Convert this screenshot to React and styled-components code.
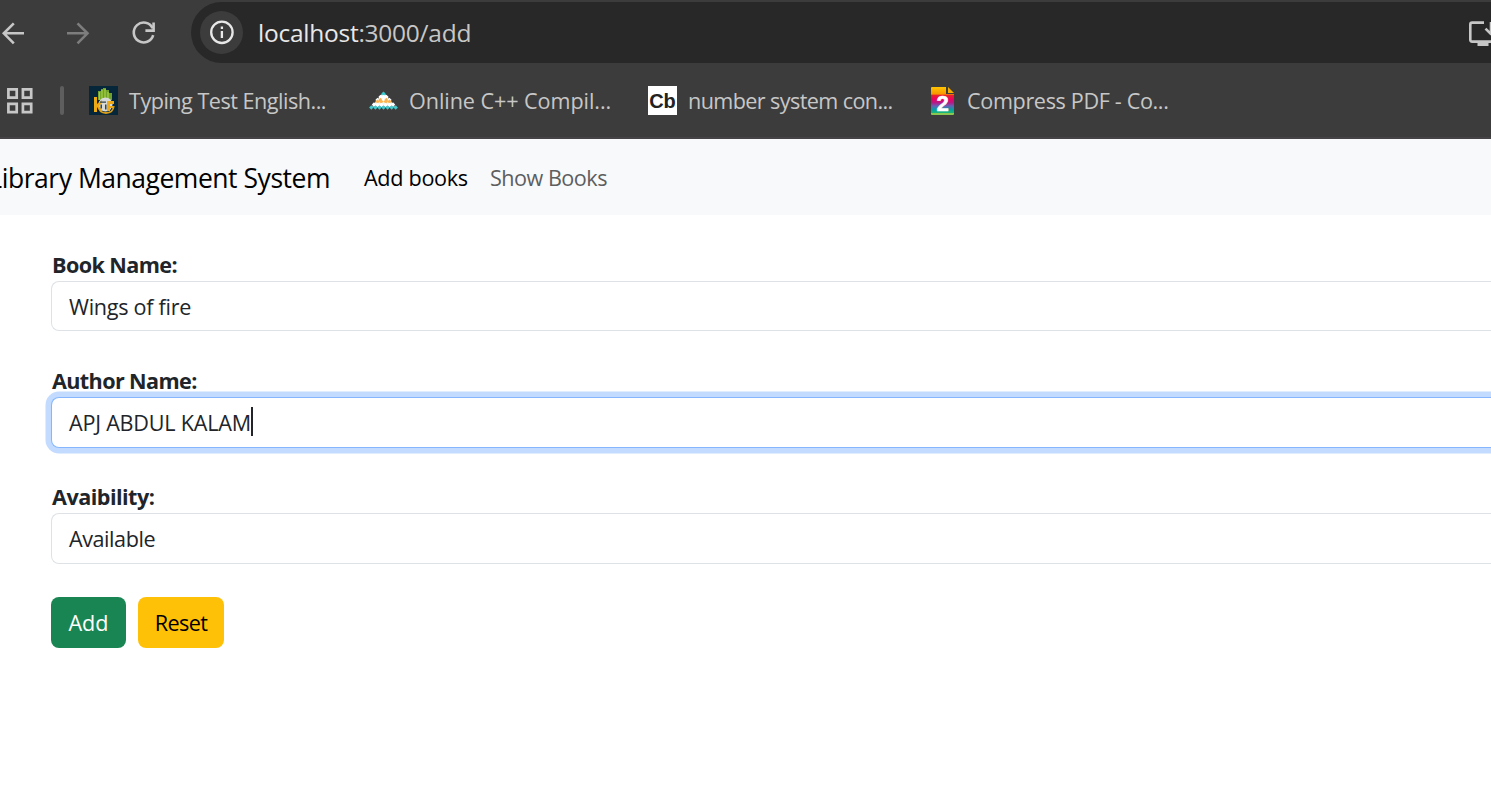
import React from "react";
import styled, { createGlobalStyle } from "styled-components";

const GlobalStyle = createGlobalStyle`
  *, *::before, *::after { box-sizing: border-box; }
  html, body { margin: 0; height: 100%; overflow: hidden; }
  body {
    background: #fff;
    color: #212529;
    font-family: "Open Sans", "Noto Sans", sans-serif;
    font-size: 21.6px;
    line-height: 33px;
  }
`;

const Chrome = styled.header`
  height: 139px;
  background: #3c3c3c;
  border-bottom: 2px solid #454345;
  overflow: hidden;
`;

const Toolbar = styled.div`
  display: flex;
  align-items: center;
  height: 63px;
  padding-top: 2px;
`;

const NavIcons = styled.div`
  display: flex;
  align-items: center;
  width: 191px;
  height: 61px;
  flex: none;
`;

const AddressBar = styled.div`
  flex: 1;
  display: flex;
  align-items: center;
  height: 61px;
  padding-left: 9px;
  border-radius: 31px 0 0 31px;
  background: #282828;
  color: #c7c7c7;
  font-size: 24.5px;
  white-space: nowrap;
`;

const InfoBadge = styled.span`
  display: grid;
  place-items: center;
  width: 43px;
  height: 43px;
  margin-right: 15px;
  border-radius: 50%;
  background: #3c3c3c;
`;

const Url = styled.span`
  flex: 1;
  letter-spacing: ${(p) => p.$track}px;
`;

const Host = styled.span`
  color: #e8e8e8;
`;

const Bookmarks = styled.nav`
  display: flex;
  align-items: center;
  height: 75px;
  padding-left: 6px;
  color: #c7c7c7;
`;

const Divider = styled.span`
  width: 4px;
  height: 29px;
  margin: 0 25px 0 27px;
  border-radius: 2px;
  background: #5e5e5e;
`;

const Bookmark = styled.span`
  display: flex;
  align-items: center;
  gap: ${(p) => p.$gap || 11}px;
  flex: none;
  width: ${(p) => p.$width}px;
  white-space: nowrap;
  letter-spacing: ${(p) => p.$track}px;
  svg { flex: none; }
`;

const CbTile = styled.span`
  width: 29px;
  height: 29px;
  background: #fff;
  color: #222;
  font: bold 20px/30px "Liberation Sans", sans-serif;
  letter-spacing: 0;
  text-align: center;
`;

const Navbar = styled.nav`
  display: flex;
  align-items: center;
  height: 76px;
  background: #f8f9fb;
  white-space: nowrap;
`;

const Brand = styled.span`
  display: flex;
  justify-content: flex-end;
  width: 330px;
  margin-right: 34px;
  padding-top: 3px;
  color: #000;
  font-size: 26.5px;
  letter-spacing: ${(p) => p.$track}px;
`;

const NavLink = styled.a`
  width: ${(p) => p.$width}px;
  color: ${(p) => (p.$active ? "#000" : "#5d5e5f")};
  letter-spacing: ${(p) => p.$track}px;
`;

const Form = styled.form`
  padding: 33px 0 0 51px;
`;

const Field = styled.div`
  height: 116px;
`;

const Label = styled.label`
  display: block;
  height: 33px;
  padding-left: 1px;
  font-weight: 700;
  letter-spacing: ${(p) => p.$track}px;
`;

const Control = styled.div`
  display: flex;
  align-items: center;
  height: ${(p) => p.$height || 50}px;
  padding-left: 17px;
  border: 1px solid ${(p) => (p.$focused ? "#86b7fe" : "#dee2e6")};
  border-right: 0;
  border-radius: 8px 0 0 8px;
  background: #fff;
  box-shadow: ${(p) => (p.$focused ? "0 0 0 5.5px #c2dbff" : "none")};
  letter-spacing: ${(p) => p.$track}px;
`;

const Caret = styled.span`
  width: 2px;
  height: 29px;
  margin-bottom: 2px;
  background: #212529;
`;

const Actions = styled.div`
  display: flex;
  gap: 12px;
  padding-top: 1px;
`;

const Button = styled.button`
  width: ${(p) => p.$width}px;
  height: 51px;
  padding: 0;
  border: 0;
  border-radius: 8px;
  background: ${(p) => (p.$kind === "success" ? "#198552" : "#ffc107")};
  color: ${(p) => (p.$kind === "success" ? "#fff" : "#000")};
  font: inherit;
  letter-spacing: ${(p) => p.$track}px;
`;

const NavGlyphs = () => (
  <svg width="191" height="61" viewBox="0 2 191 61" fill="none" stroke="#c7c7c7" strokeWidth="2.6">
    <path d="M24 33.3H4M13.8 23.3L3.8 33.3l10 10" />
    <path d="M67 33.3h20M77.5 23.3l10 10-10 10" stroke="#7d7d7d" />
    <path d="M152.6 28.2A9.9 9.9 0 1 0 153.2 35.2" />
    <path d="M153.6 22.4v8.2h-8.2" />
  </svg>
);

const InfoIcon = () => (
  <svg width="25" height="25" viewBox="0 0 25 25" fill="none" stroke="#e8e8e8" strokeWidth="2.3">
    <circle cx="12.9" cy="12.3" r="10.7" />
    <path d="M12.9 11v7M12.9 6.4v2.5" />
  </svg>
);

const InstallIcon = () => (
  <svg width="23" height="30" viewBox="0 0 23 30" fill="none" stroke="#c7c7c7" strokeWidth="2.6">
    <path d="M16 4.6H4.2Q2.3 4.6 2.3 6.6v15.2q0 1.8 1.9 1.8H24" />
    <path d="M9.5 26h11" strokeWidth="4" />
    <path d="M17.5 10.6l6 6M23 4v12" />
  </svg>
);

const AppsIcon = () => (
  <svg width="27" height="27" viewBox="0 0 27 27" fill="none" stroke="#c7c7c7" strokeWidth="2.7">
    <path d="M2.4 2.4h8.3v8.3H2.4zM16.9 2.4h8.3v8.3h-8.3zM2.4 16.9h8.3v8.3H2.4zM16.9 16.9h8.3v8.3h-8.3z" />
  </svg>
);

const TypingIcon = () => (
  <svg width="29" height="29" viewBox="0 0 29 29">
    <path fill="#06263a" d="M0 0h29v29H0z" />
    <path fill="#6f9f2c" d="M9 14V5h3V3h2V2h3v2h3v3h3v7z" />
    <path stroke="#a2cf3c" strokeWidth="1.3" d="M13 4v10M16 3v9M19 6v7M10.5 6v8" />
    <circle cx="16.5" cy="18.5" r="7" fill="#d8dad7" />
    <path d="M9 19.5q1 7.5 8 7.5t7.8-7" fill="none" stroke="#d69b1b" strokeWidth="1.8" />
    <path fill="#edaa16" d="M5 11h3v15H5zM8 18l5-4v3l-3 3 3 4v2l-5-5zM18 15h7v3h-4v2h3v2h-3v3h-3z" />
    <path fill="#31454c" d="M11 15.5h6v1.3h-6zM11.5 18.5h1.5v4h-1.5zM16 18.5h1.5v5H16z" />
  </svg>
);

const PYRAMID = [
  [14.5, 1.8, "#36c7cc"],
  [11.5, 5, "#fff"], [14.5, 5, "#fff"], [17.5, 5, "#fff"],
  [8.5, 8, "#fff"], [11.5, 8, "#f4b04e"], [14.5, 8, "#fff"], [17.5, 8, "#f4b04e"], [20.5, 8, "#fff"],
  [8.5, 9.6, "#ffb44d"], [12.3, 9.6, "#ffb44d"], [16.7, 9.6, "#ffb44d"], [20.5, 9.6, "#ffb44d"],
  [5, 12.5, "#fff"], [8.5, 13, "#fff"], [12.5, 13, "#fff"], [16.5, 13, "#fff"], [20.5, 13, "#fff"], [24, 12.5, "#fff"],
  [2.3, 15.5, "#42c9ce"], [6.4, 15.5, "#42c9ce"], [10.5, 15.5, "#42c9ce"], [14.5, 15.5, "#42c9ce"], [18.6, 15.5, "#42c9ce"], [22.7, 15.5, "#42c9ce"], [26.7, 15.5, "#42c9ce"],
];

const PyramidIcon = () => (
  <svg width="29" height="29" viewBox="0 -6 29 29">
    <path fill="#eef8f6" d="M14.5 0L3 14.5h23z" />
    {PYRAMID.map(([x, y, fill]) => (
      <path key={`${x}-${y}`} fill={fill} d={`M${x} ${y - 2.2}l2.2 2.2-2.2 2.2-2.2-2.2z`} />
    ))}
  </svg>
);

const PdfIcon = () => (
  <svg width="25" height="29" viewBox="0 0 25 29">
    <defs>
      <linearGradient id="rainbow" x1="0" x2="0" y1="0" y2="1">
        <stop offset="0" stopColor="#ffc400" />
        <stop offset=".25" stopColor="#f79700" />
        <stop offset=".3" stopColor="#e9202b" />
        <stop offset=".44" stopColor="#ec0060" />
        <stop offset=".56" stopColor="#b51a87" />
        <stop offset=".68" stopColor="#6961b5" />
        <stop offset=".8" stopColor="#079da1" />
        <stop offset=".92" stopColor="#19b77b" />
        <stop offset=".94" stopColor="#8bc653" />
      </linearGradient>
    </defs>
    <path fill="url(#rainbow)" d="M2 1H16v7h8v20q0 1-1 1H2q-1 0-1-1V2q0-1 1-1z" />
    <path fill="#f7ad00" d="M18 1l6 6h-6z" />
    <text x="12.4" y="24.7" textAnchor="middle" fill="#fff" stroke="#fff" strokeWidth=".6" fontFamily="Liberation Sans, sans-serif" fontWeight="700" fontSize="22">2</text>
  </svg>
);

export default function App() {
  return (
    <>
      <GlobalStyle />
      <Chrome>
        <Toolbar>
          <NavIcons><NavGlyphs /></NavIcons>
          <AddressBar>
            <InfoBadge><InfoIcon /></InfoBadge>
            <Url $track={-0.25}><Host>localhost</Host>:3000/add</Url>
            <InstallIcon />
          </AddressBar>
        </Toolbar>
        <Bookmarks>
          <AppsIcon />
          <Divider />
          <Bookmark $width={280} $track={-0.5}><TypingIcon />Typing Test English...</Bookmark>
          <Bookmark $width={279} $track={-0.07}><PyramidIcon />Online C++ Compil...</Bookmark>
          <Bookmark $width={282} $track={-0.6}><CbTile>Cb</CbTile>number system con...</Bookmark>
          <Bookmark $width={250} $gap={12} $track={-0.35}><PdfIcon />Compress PDF - Co...</Bookmark>
        </Bookmarks>
      </Chrome>
      <Navbar>
        <Brand $track={-0.47}>Library Management System</Brand>
        <NavLink $active $width={126} $track={-0.3}>Add books</NavLink>
        <NavLink $width={125} $track={-0.5}>Show Books</NavLink>
      </Navbar>
      <Form>
        <Field>
          <Label $track={-0.6}>Book Name:</Label>
          <Control $track={-0.28}>Wings of fire</Control>
        </Field>
        <Field>
          <Label $track={-0.62}>Author Name:</Label>
          <Control $focused $height={51} $track={-0.22}>APJ ABDUL KALAM<Caret /></Control>
        </Field>
        <Field>
          <Label $track={-0.52}>Avaibility:</Label>
          <Control $height={51} $track={-0.45}>Available</Control>
        </Field>
        <Actions>
          <Button type="button" $kind="success" $width={75} $track={0}>Add</Button>
          <Button type="button" $kind="warning" $width={86} $track={-0.6}>Reset</Button>
        </Actions>
      </Form>
    </>
  );
}
